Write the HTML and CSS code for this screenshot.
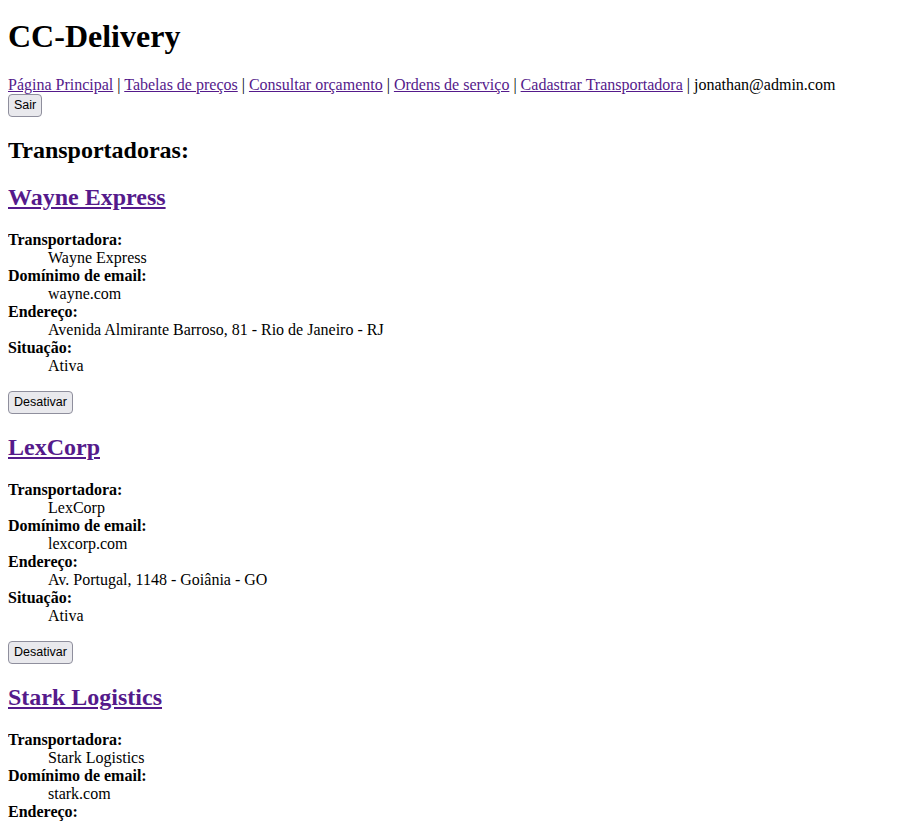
FILE: index.html
```html
<!DOCTYPE html>
<html lang="pt-BR">
<head>
<meta charset="utf-8">
<title>CC-Delivery</title>
<link rel="stylesheet" href="styles.css">
</head>
<body>
<header>
  <h1 class="title">CC-Delivery</h1>
  <nav class="nav">
    <a href="#">Página Principal</a> | <a href="#">Tabelas de preços</a> | <a href="#">Consultar orçamento</a> | <a href="#">Ordens de serviço</a> | <a href="#">Cadastrar Transportadora</a> | jonathan@admin.com
    <form class="logout"><button type="button" class="btn">Sair</button></form>
  </nav>
</header>
<main>
  <h2 class="section">Transportadoras:</h2>

  <div class="carrier">
    <h2 class="carrier-name"><a href="#">Wayne Express</a></h2>
    <dl class="details">
      <dt>Transportadora:</dt><dd>Wayne Express</dd>
      <dt>Domínimo de email:</dt><dd>wayne.com</dd>
      <dt>Endereço:</dt><dd>Avenida Almirante Barroso, 81 - Rio de Janeiro - RJ</dd>
      <dt>Situação:</dt><dd>Ativa</dd>
    </dl>
    <form><button type="button" class="btn">Desativar</button></form>
  </div>

  <div class="carrier">
    <h2 class="carrier-name"><a href="#">LexCorp</a></h2>
    <dl class="details">
      <dt>Transportadora:</dt><dd>LexCorp</dd>
      <dt>Domínimo de email:</dt><dd>lexcorp.com</dd>
      <dt>Endereço:</dt><dd>Av. Portugal, 1148 - Goiânia - GO</dd>
      <dt>Situação:</dt><dd>Ativa</dd>
    </dl>
    <form><button type="button" class="btn">Desativar</button></form>
  </div>

  <div class="carrier">
    <h2 class="carrier-name"><a href="#">Stark Logistics</a></h2>
    <dl class="details">
      <dt>Transportadora:</dt><dd>Stark Logistics</dd>
      <dt>Domínimo de email:</dt><dd>stark.com</dd>
      <dt>Endereço:</dt><dd>Rua Augusta, 500 - São Paulo - SP</dd>
      <dt>Situação:</dt><dd>Ativa</dd>
    </dl>
    <form><button type="button" class="btn">Desativar</button></form>
  </div>
</main>
</body>
</html>
```
FILE: styles.css
```css
body {
  margin: 8px;
  font-family: "Liberation Serif", "Times New Roman", serif;
  font-size: 16px;
  color: #000;
  background: #fff;
}
a {
  color: #551a8b;
}
.title {
  font-size: 2em;
  margin: 10px 0 0.67em;
}
.logout {
  margin: 0;
}
.btn {
  font-family: "Liberation Sans", Arial, sans-serif;
  font-size: 12.5px;
  line-height: 15px;
  color: #000;
  background: #e9e9ed;
  border: 1px solid #8f8f9d;
  border-radius: 4px;
  padding: 3px 5px;
}
.section, .carrier-name {
  font-size: 1.5em;
  margin: 0.83em 0;
}
.details {
  margin: 1em 0;
}
.details dt {
  font-weight: bold;
}
.details dd {
  margin-left: 40px;
}
.carrier form {
  margin: 0;
}
```
